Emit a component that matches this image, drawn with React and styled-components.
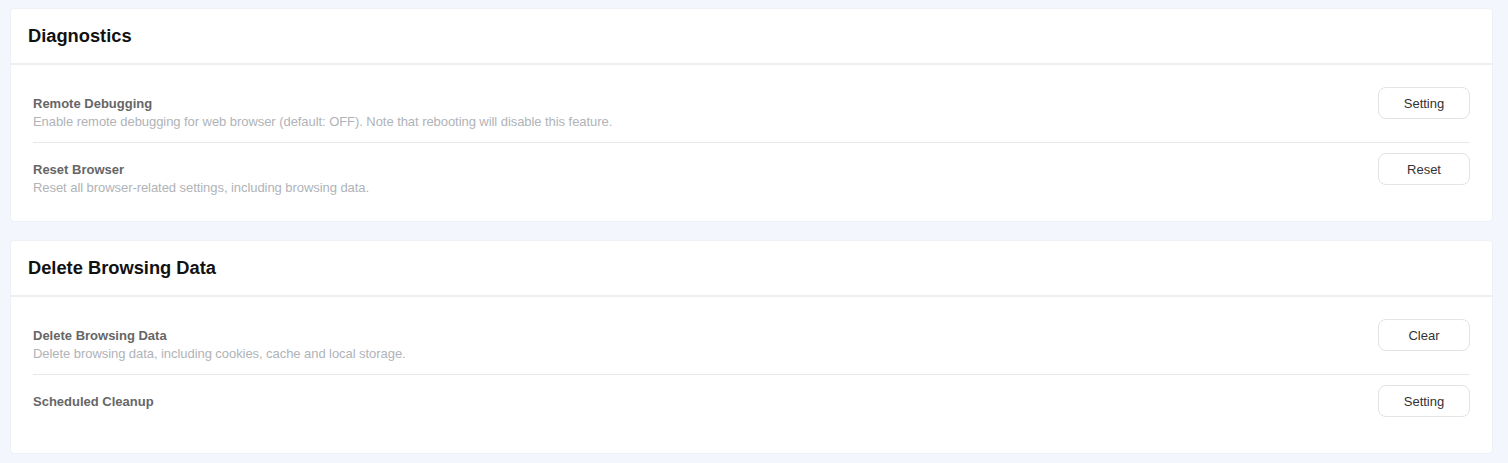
import React from "react";
import styled, { createGlobalStyle } from "styled-components";

const GlobalStyle = createGlobalStyle`
  html, body {
    margin: 0;
    padding: 0;
    background: #f3f7fd;
    font-family: "Liberation Sans", Arial, sans-serif;
  }
`;

const Page = styled.div`
  display: flex;
  flex-direction: column;
  gap: 18px;
  padding: 8px 15px 10px 10px;
`;

const Card = styled.section`
  background: #fff;
  border: 1px solid #edf0f4;
  border-radius: 4px;
`;

const CardHeader = styled.div`
  height: 54px;
  display: flex;
  align-items: center;
  padding: 0 17px;
  border-bottom: 2px solid #eceef1;
`;

const CardTitle = styled.h2`
  margin: 0;
  font-size: 18.3px;
  font-weight: 700;
  color: #111;
`;

const CardBody = styled.div`
  padding: 12px 22px 13px 22px;
`;

const Row = styled.div`
  display: flex;
  align-items: flex-start;
  justify-content: space-between;
  padding: 10px 0 12px;
  border-bottom: ${({ $last }) => ($last ? "none" : "1px solid #e6e8eb")};
`;

const Info = styled.div`
  display: flex;
  flex-direction: column;
  padding-top: 7px;
`;

const Title = styled.div`
  font-size: 13px;
  font-weight: 700;
  line-height: 20px;
  color: #666;
`;

const Desc = styled.div`
  font-size: 13px;
  line-height: 16px;
  min-height: 16px;
  letter-spacing: -0.06px;
  color: #b0b3b8;
`;

const Button = styled.button`
  width: 92px;
  height: 32px;
  flex-shrink: 0;
  background: #fff;
  border: 1px solid #e1e3e7;
  border-radius: 8px;
  font-family: inherit;
  font-size: 13px;
  color: #333;
  cursor: pointer;
`;

const sections = [
  {
    title: "Diagnostics",
    rows: [
      {
        title: "Remote Debugging",
        desc: "Enable remote debugging for web browser (default: OFF). Note that rebooting will disable this feature.",
        action: "Setting",
      },
      {
        title: "Reset Browser",
        desc: "Reset all browser-related settings, including browsing data.",
        action: "Reset",
      },
    ],
  },
  {
    title: "Delete Browsing Data",
    rows: [
      {
        title: "Delete Browsing Data",
        desc: "Delete browsing data, including cookies, cache and local storage.",
        action: "Clear",
      },
      { title: "Scheduled Cleanup", desc: "", action: "Setting" },
    ],
  },
];

export default function App() {
  return (
    <>
      <GlobalStyle />
      <Page>
        {sections.map((s) => (
          <Card key={s.title}>
            <CardHeader>
              <CardTitle>{s.title}</CardTitle>
            </CardHeader>
            <CardBody>
              {s.rows.map((r, i) => (
                <Row key={r.title} $last={i === s.rows.length - 1}>
                  <Info>
                    <Title>{r.title}</Title>
                    <Desc>{r.desc}</Desc>
                  </Info>
                  <Button>{r.action}</Button>
                </Row>
              ))}
            </CardBody>
          </Card>
        ))}
      </Page>
    </>
  );
}
